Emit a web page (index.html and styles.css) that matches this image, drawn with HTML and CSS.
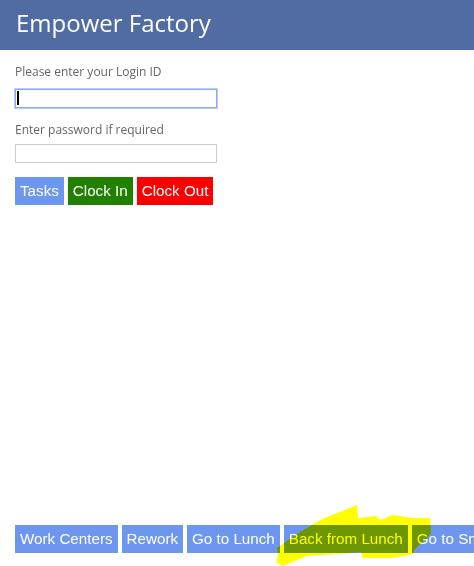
FILE: index.html
```html
<!DOCTYPE html>
<html lang="en">
<head>
  <meta charset="UTF-8">
  <meta name="viewport" content="width=device-width, initial-scale=1.0">
  <title>Empower Factory</title>

  <link rel="stylesheet" href="styles.css">
</head>
<body>
  <div class="page">
    <header class="header">
      <h1>Empower Factory</h1>
    </header>

    <div class="login">
      <label class="field-label" for="loginId">Please enter your Login ID</label>
      <div class="field-wrap">
        <input class="field focused" type="text" id="loginId">
        <span class="caret"></span>
      </div>

      <label class="field-label second" for="password">Enter password if required</label>
      <input class="field" type="password" id="password">

      <div class="button-row">
        <button class="btn blue">Tasks</button>
        <button class="btn green">Clock In</button>
        <button class="btn red">Clock Out</button>
      </div>
    </div>

    <div class="footer">
      <div class="button-row">
        <button class="btn blue">Work Centers</button>
        <button class="btn blue">Rework</button>
        <button class="btn blue">Go to Lunch</button>
        <button class="btn blue">Back from Lunch</button>
        <button class="btn blue">Go to Smoke Break</button>
        <button class="btn blue">Back from Smoke Break</button>
      </div>
    </div>
  </div>

  <!-- highlighter scribble over the screenshot -->
  <svg class="scribble" width="474" height="566" viewBox="0 0 474 566">
    <polygon points="277,548 300,532 322,519 340,512 357,505 358,518 376,516 380,520 393,515 413,518 430,518 431,534 414,550 413,554 393,558 363,558 361,552 335,554 307,556 283,566 276,562 278,556" fill="#ffff00"/>
  </svg>
</body>
</html>
```

FILE: styles.css
```css
* {
  margin: 0;
  padding: 0;
  box-sizing: border-box;
}

body {
  font-family: 'Liberation Sans', Arial, sans-serif;
  background-color: #ffffff;
  overflow: hidden;
}

.page {
  display: flex;
  flex-direction: column;
  min-height: 100vh;
}

.header {
  height: 50px;
  background-color: #516ca2;
  padding-left: 16px;
  display: flex;
  align-items: center;
}

.header h1 {
  font-family: 'Open Sans', 'Noto Sans', sans-serif;
  font-weight: 400;
  font-size: 24px;
  color: #ffffff;
  line-height: 1;
  margin-top: -4px;
}

.login {
  padding: 13px 15px 0;
}

.field-label {
  display: block;
  font-family: 'Open Sans', 'Noto Sans', sans-serif;
  font-size: 12px;
  line-height: 18px;
  color: #666;
}

.field-label.second {
  margin-top: 13px;
}

.field-wrap {
  position: relative;
  width: 202px;
  margin-top: 8px;
}

.field {
  display: block;
  width: 202px;
  height: 19px;
  border: 1px solid #cccccc;
  background: #fff;
  outline: none;
}

.field.focused {
  border-color: #8eaaf0;
  box-shadow: 0 0 0 1px #b8ccf7;
}

.caret {
  position: absolute;
  left: 2px;
  top: 2px;
  width: 2px;
  height: 14px;
  background: #000;
}

#password {
  margin-top: 5px;
}

.button-row {
  display: flex;
  gap: 4px;
  white-space: nowrap;
}

.login .button-row {
  margin-top: 14px;
}

.btn {
  font-family: 'Liberation Sans', Arial, sans-serif;
  font-size: 15.2px;
  line-height: 18px;
  padding: 5px 5px;
  height: 28px;
  color: #ffffff;
  border: none;
  flex-shrink: 0;
  cursor: pointer;
}

.blue {
  background-color: #6d96ef;
}

.green {
  background-color: #218000;
}

.red {
  background-color: #fa0000;
}

.footer {
  margin-top: auto;
  padding: 0 15px 13px;
}

.scribble {
  position: absolute;
  left: 0;
  top: 0;
  mix-blend-mode: multiply;
  pointer-events: none;
}
```
